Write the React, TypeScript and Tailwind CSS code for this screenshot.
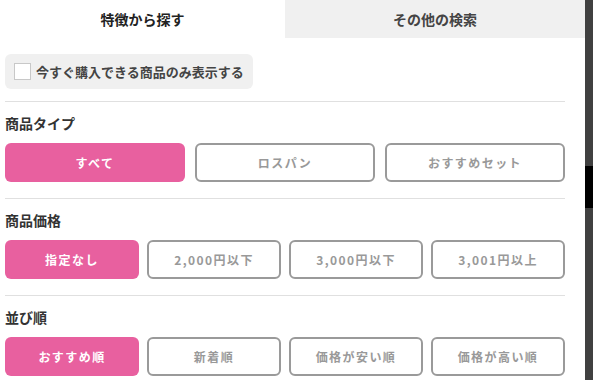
import { useState } from 'react';

type Section = {
  title: string;
  options: string[];
  cols: 'grid-cols-3' | 'grid-cols-4';
};

const sections: Section[] = [
  { title: '商品タイプ', options: ['すべて', 'ロスパン', 'おすすめセット'], cols: 'grid-cols-3' },
  { title: '商品価格', options: ['指定なし', '2,000円以下', '3,000円以下', '3,001円以上'], cols: 'grid-cols-4' },
  { title: '並び順', options: ['おすすめ順', '新着順', '価格が安い順', '価格が高い順'], cols: 'grid-cols-4' },
];

function OptionRow({ section }: { section: Section }) {
  const [active, setActive] = useState(0);
  return (
    <div className="border-t border-[#e0e0e0] pt-[11px] pb-4">
      <h3 className="h-5 text-[14px] leading-5 font-bold text-[#333]">{section.title}</h3>
      <div className={`mt-[10px] grid ${section.cols} ${section.cols === 'grid-cols-3' ? 'gap-[10px]' : 'gap-2'}`}>
        {section.options.map((opt, i) =>
          i === active ? (
            <button
              key={opt}
              type="button"
              onClick={() => setActive(i)}
              className="h-[39px] rounded-md bg-[#e8609f] text-[12px] font-bold tracking-[0.12em] text-white"
            >
              {opt}
            </button>
          ) : (
            <button
              key={opt}
              type="button"
              onClick={() => setActive(i)}
              className="h-[39px] rounded-md border-2 border-[#9a9a9a] bg-white text-[12px] font-bold tracking-[0.12em] text-[#999]"
            >
              {opt}
            </button>
          )
        )}
      </div>
    </div>
  );
}

export default function App() {
  const [inStock, setInStock] = useState(false);

  return (
    <div className="flex h-[380px] w-[593px] overflow-hidden bg-white font-['Noto_Sans_CJK_JP','Noto_Sans',sans-serif]">
      <div className="w-[585px] shrink-0">
        {/* Tabs */}
        <div className="flex h-[38px]">
          <div className="flex w-[285px] items-center justify-center text-[14px] font-bold text-[#222]">
            特徴から探す
          </div>
          <div className="flex flex-1 items-center justify-center bg-[#f0f0f0] text-[14px] font-bold text-[#444]">
            その他の検索
          </div>
        </div>

        <div className="pl-[5px] pr-5">
          <label className="mt-4 mb-3 flex h-[35px] w-[248px] cursor-pointer items-center gap-[5px] rounded-md bg-[#f0f0f0] pl-[9px]">
            <input
              type="checkbox"
              checked={inStock}
              onChange={() => setInStock(!inStock)}
              className="h-[17px] w-[17px] appearance-none border border-[#c8c8c8] bg-white"
            />
            <span className="text-[13px] font-bold text-[#444]">今すぐ購入できる商品のみ表示する</span>
          </label>

          {sections.map((s) => (
            <OptionRow key={s.title} section={s} />
          ))}
        </div>
      </div>

      {/* page behind the drawer */}
      <div className="flex flex-1 flex-col bg-[#404040]">
        <div className="h-[166px]" />
        <div className="h-[42px] bg-black" />
      </div>
    </div>
  );
}
